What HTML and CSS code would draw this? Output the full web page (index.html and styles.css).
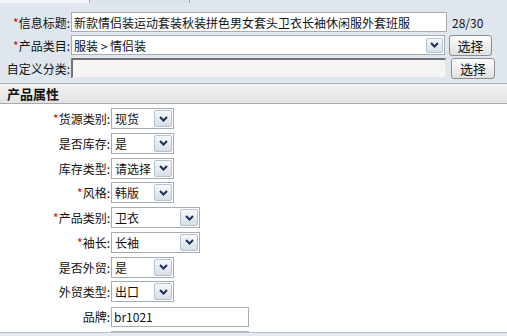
FILE: index.html
```html
<!DOCTYPE html>
<html lang="zh-CN">
<head>
  <meta charset="UTF-8">
  <title>产品信息</title>
  <link rel="stylesheet" href="styles.css">
</head>
<body>
  <div class="tabs">
    <span class="tab on"></span>
    <span class="tab"></span>
  </div>

  <div class="basic">
    <div class="row">
      <label class="lbl"><i>*</i>信息标题:</label>
      <input type="text" class="txt title" value="新款情侣装运动套装秋装拼色男女套头卫衣长袖休闲服外套班服">
      <span class="count">28/30</span>
    </div>

    <div class="row">
      <label class="lbl"><i>*</i>产品类目:</label>
      <div class="sel sunken cat">
        <span class="val">服装 &gt; 情侣装</span>
        <span class="arr"><svg width="9" height="6" viewBox="0 0 9 6"><polyline points="1,1 4.5,4.5 8,1"/></svg></span>
      </div>
      <button class="btn">选择</button>
    </div>

    <div class="row">
      <label class="lbl">自定义分类:</label>
      <input type="text" class="txt sunken custom">
      <button class="btn btn2">选择</button>
    </div>
  </div>

  <div class="boxtitle">产品属性</div>

  <div class="props">
    <div class="prow">
      <label class="lbl"><i>*</i>货源类别:</label>
      <div class="sel short"><span class="val">现货</span><span class="arr"><svg width="9" height="6" viewBox="0 0 9 6"><polyline points="1,1 4.5,4.5 8,1"/></svg></span></div>
    </div>
    <div class="prow">
      <label class="lbl">是否库存:</label>
      <div class="sel short"><span class="val">是</span><span class="arr"><svg width="9" height="6" viewBox="0 0 9 6"><polyline points="1,1 4.5,4.5 8,1"/></svg></span></div>
    </div>
    <div class="prow">
      <label class="lbl">库存类型:</label>
      <div class="sel short"><span class="val">请选择</span><span class="arr"><svg width="9" height="6" viewBox="0 0 9 6"><polyline points="1,1 4.5,4.5 8,1"/></svg></span></div>
    </div>
    <div class="prow">
      <label class="lbl"><i>*</i>风格:</label>
      <div class="sel short"><span class="val">韩版</span><span class="arr"><svg width="9" height="6" viewBox="0 0 9 6"><polyline points="1,1 4.5,4.5 8,1"/></svg></span></div>
    </div>
    <div class="prow">
      <label class="lbl"><i>*</i>产品类别:</label>
      <div class="sel long"><span class="val">卫衣</span><span class="arr"><svg width="9" height="6" viewBox="0 0 9 6"><polyline points="1,1 4.5,4.5 8,1"/></svg></span></div>
    </div>
    <div class="prow">
      <label class="lbl"><i>*</i>袖长:</label>
      <div class="sel long"><span class="val">长袖</span><span class="arr"><svg width="9" height="6" viewBox="0 0 9 6"><polyline points="1,1 4.5,4.5 8,1"/></svg></span></div>
    </div>
    <div class="prow">
      <label class="lbl">是否外贸:</label>
      <div class="sel short"><span class="val">是</span><span class="arr"><svg width="9" height="6" viewBox="0 0 9 6"><polyline points="1,1 4.5,4.5 8,1"/></svg></span></div>
    </div>
    <div class="prow">
      <label class="lbl">外贸类型:</label>
      <div class="sel short"><span class="val">出口</span><span class="arr"><svg width="9" height="6" viewBox="0 0 9 6"><polyline points="1,1 4.5,4.5 8,1"/></svg></span></div>
    </div>
    <div class="prow">
      <label class="lbl">品牌:</label>
      <input type="text" class="txt brand" value="br1021">
    </div>
    <div class="prow">
      <label class="lbl"></label>
      <input type="text" class="txt brand">
    </div>
  </div>

  <div class="foot"></div>
</body>
</html>
```

FILE: styles.css
```css
* {
  box-sizing: border-box;
}

body {
  margin: 0;
  font-family: "Noto Sans CJK SC", "Noto Sans", sans-serif;
  font-size: 12px;
  color: #111;
  background-color: #fff;
  overflow: hidden;
}

.tabs {
  display: flex;
  height: 3px;
  background-color: #e0e6ee;
}

.tab {
  width: 90px;
  background-color: #f3f6f9;
  border-right: 1px solid #9aa6b4;
}

.tab + .tab {
  width: 100px;
  background-color: #dce3eb;
}

.basic {
  background-color: #e0e6ee;
  padding: 9px 0 5px;
  display: flex;
  flex-direction: column;
  gap: 3px;
  border-bottom: 1px solid #aab3bf;
}

.row,
.prow {
  display: flex;
  align-items: center;
  height: 20px;
  flex: none;
}

.lbl {
  width: 71px;
  flex: none;
  text-align: right;
  white-space: nowrap;
  padding-right: 1px;
}

.lbl i {
  color: #e00;
  font-style: normal;
}

.txt {
  height: 20px;
  border: 1px solid #a5acb2;
  background-color: #fff;
  padding: 0 2px;
  font: inherit;
  color: #111;
  outline: none;
}

.title {
  width: 376px;
}

.count {
  margin-left: 5px;
}

.sunken {
  border-style: solid;
  border-width: 2px 1px 1px 2px;
  border-color: #727272 #e6e6e6 #e6e6e6 #727272;
  background-color: #f5f5f5;
}

.custom {
  width: 375px;
}

.sel {
  display: flex;
  align-items: center;
  height: 21px;
  border: 1px solid #a5acb2;
  background-color: #fff;
  padding-left: 3px;
}

.sel .val {
  flex: 1;
  white-space: nowrap;
}

.sel .arr {
  width: 18px;
  height: 17px;
  margin-right: 1px;
  border: 1px solid #b5c0d1;
  border-radius: 2px;
  background: linear-gradient(#f7f9fc, #d7dee8);
  display: flex;
  align-items: center;
  justify-content: center;
}

.sel svg polyline {
  fill: none;
  stroke: #1f2f52;
  stroke-width: 2;
}

.cat {
  width: 374px;
  height: 20px;
  padding-left: 2px;
}

.cat .arr {
  height: 15px;
  width: 17px;
}

.btn {
  margin-left: 4px;
  width: 43px;
  height: 21px;
  padding: 0;
  border: 1px solid #8d8d8d;
  border-radius: 3px;
  background: linear-gradient(#fdfdfd, #e0e0e0);
  font-family: "Noto Sans CJK SC", sans-serif;
  font-size: 13px;
  color: #111;
}

.btn2 {
  margin-left: 5px;
  width: 44px;
}

.boxtitle {
  height: 20px;
  padding-left: 7px;
  font-size: 13px;
  font-weight: bold;
  line-height: 19px;
  background: linear-gradient(#f2f2f2, #e3e3e3);
  border-bottom: 1px solid #a8a8a8;
}

.props {
  height: 228px;
  overflow: hidden;
  padding-top: 4px;
  display: flex;
  flex-direction: column;
  gap: 3.75px;
}

.prow {
  height: 21px;
}

.prow .lbl {
  width: 111px;
}

.short {
  width: 63px;
}

.long {
  width: 89px;
}

.brand {
  width: 138px;
  height: 20px;
}

.foot {
  height: 4px;
  border-top: 1px solid #b8bec8;
  background-color: #e6e9ee;
}
```
